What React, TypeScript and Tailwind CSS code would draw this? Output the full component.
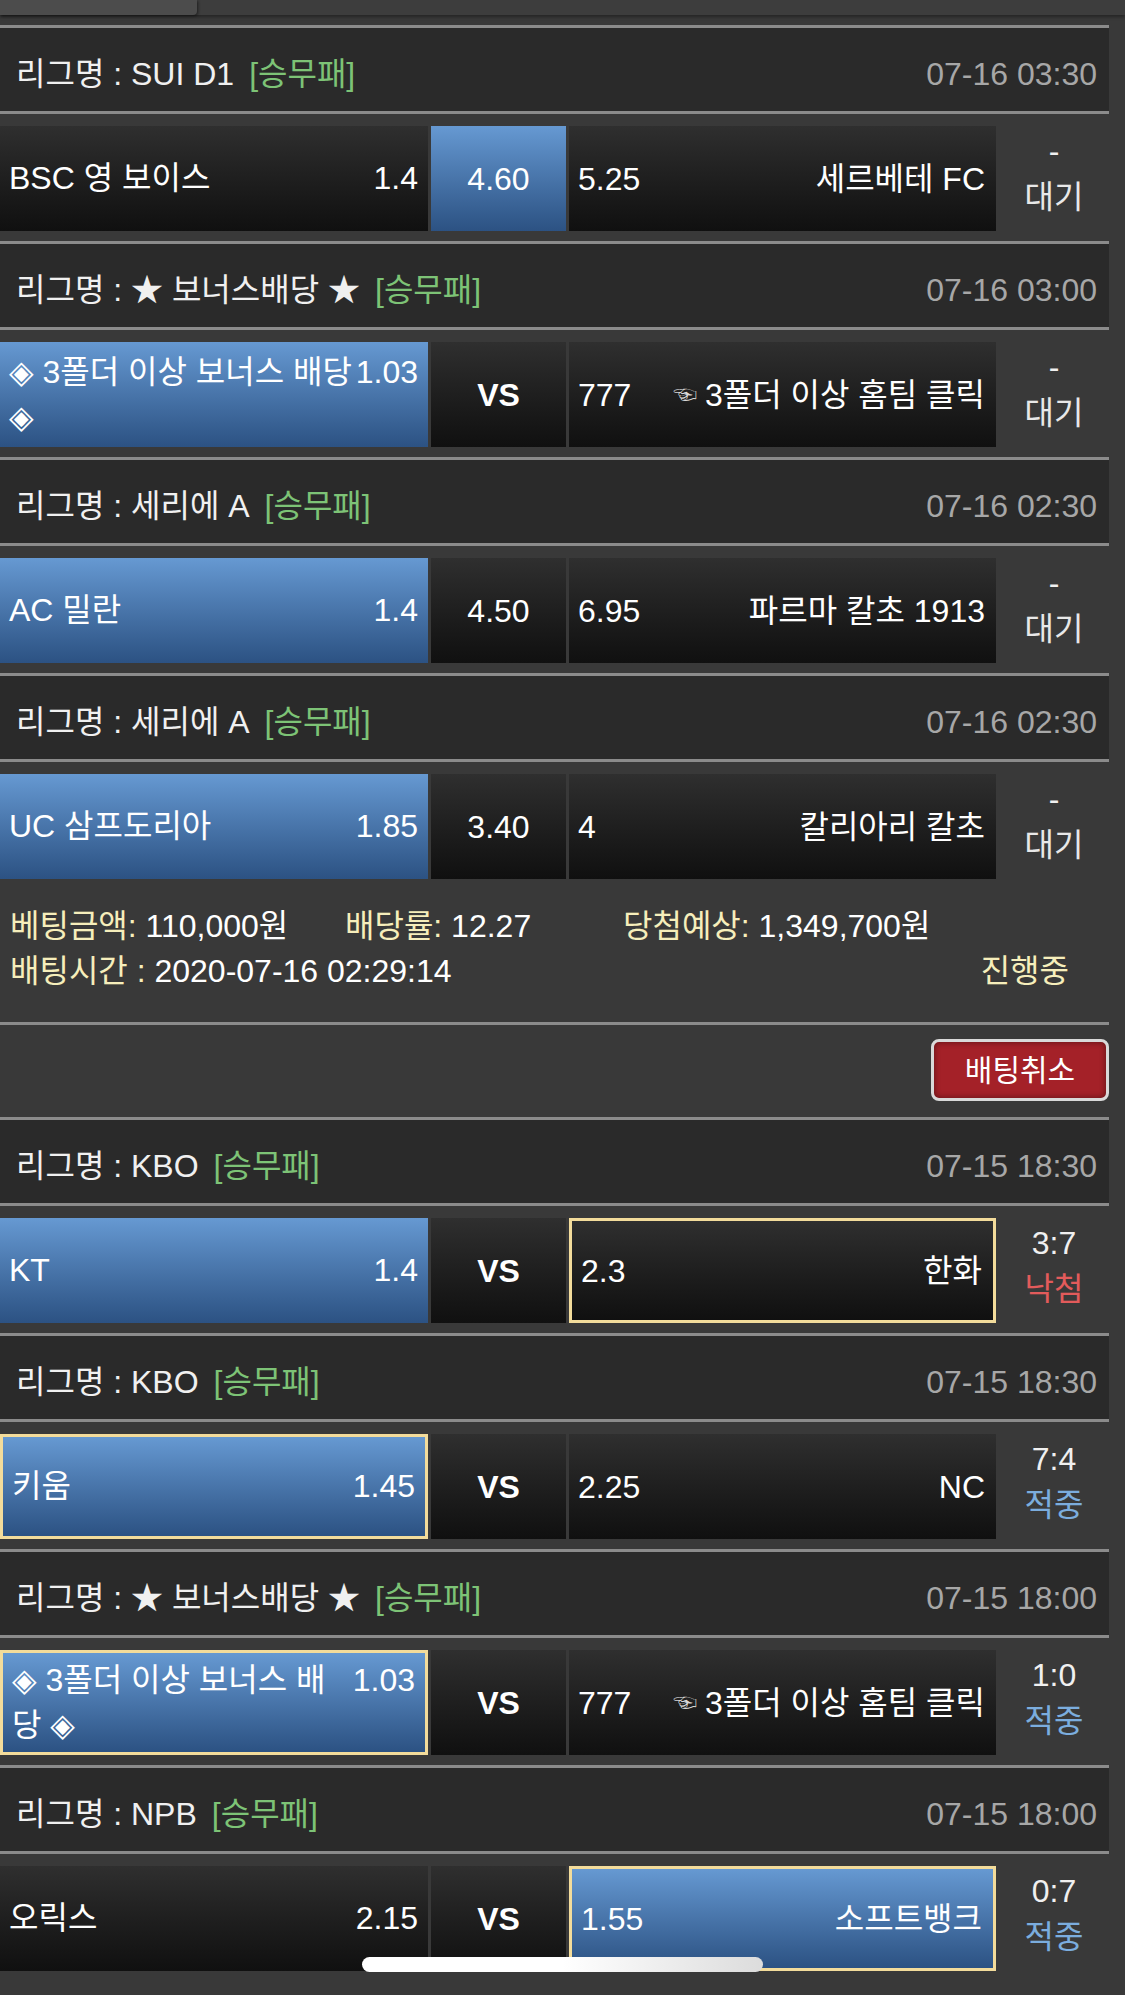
import React from 'react';

type Match = {
    league: string;
    date: string;
    home: string;
    homeOdd: string;
    draw: string;
    away: string;
    awayOdd: string;
    pick: 'home' | 'draw' | 'away';
    boxed?: 'home' | 'away';
    score: string;
    result: string;
};

const pending: Match[] = [
    { league: 'SUI D1', date: '07-16 03:30', home: 'BSC 영 보이스', homeOdd: '1.4', draw: '4.60', away: '세르베테 FC', awayOdd: '5.25', pick: 'draw', score: '-', result: '대기' },
    { league: '★ 보너스배당 ★', date: '07-16 03:00', home: '◈ 3폴더 이상 보너스 배당 ◈', homeOdd: '1.03', draw: 'VS', away: '3폴더 이상 홈팀 클릭', awayOdd: '777', pick: 'home', score: '-', result: '대기' },
    { league: '세리에 A', date: '07-16 02:30', home: 'AC 밀란', homeOdd: '1.4', draw: '4.50', away: '파르마 칼초 1913', awayOdd: '6.95', pick: 'home', score: '-', result: '대기' },
    { league: '세리에 A', date: '07-16 02:30', home: 'UC 삼프도리아', homeOdd: '1.85', draw: '3.40', away: '칼리아리 칼초', awayOdd: '4', pick: 'home', score: '-', result: '대기' },
];

const finished: Match[] = [
    { league: 'KBO', date: '07-15 18:30', home: 'KT', homeOdd: '1.4', draw: 'VS', away: '한화', awayOdd: '2.3', pick: 'home', boxed: 'away', score: '3:7', result: '낙첨' },
    { league: 'KBO', date: '07-15 18:30', home: '키움', homeOdd: '1.45', draw: 'VS', away: 'NC', awayOdd: '2.25', pick: 'home', boxed: 'home', score: '7:4', result: '적중' },
    { league: '★ 보너스배당 ★', date: '07-15 18:00', home: '◈ 3폴더 이상 보너스 배당 ◈', homeOdd: '1.03', draw: 'VS', away: '3폴더 이상 홈팀 클릭', awayOdd: '777', pick: 'home', boxed: 'home', score: '1:0', result: '적중' },
    { league: 'NPB', date: '07-15 18:00', home: '오릭스', homeOdd: '2.15', draw: 'VS', away: '소프트뱅크', awayOdd: '1.55', pick: 'away', boxed: 'away', score: '0:7', result: '적중' },
];

const dark = 'bg-linear-to-b from-[#2f2f2f] to-[#101010]';
const blue = 'bg-linear-to-b from-[#6699d2] to-[#2c5283]';

const resultColor = (r: string) =>
    r === '낙첨' ? 'text-[#e25b5b]' : r === '적중' ? 'text-[#7badde]' : 'text-[#e8e8e8]';

const MatchBlock = ({ m }: { m: Match }) => {
    const isBonus = m.away.includes('홈팀 클릭');
    return (
        <div>
            <div className="h-[3px] bg-[#8b8b8b]" />
            <div className="h-[83px] bg-[#2a2a2a] flex items-center justify-between pl-[16px] pr-[12px] pt-[8px]">
                <div className="text-[#f0f0f0]">
                    리그명 : {m.league}
                    <span className="ml-[15px] text-[#7dc376]">[승무패]</span>
                </div>
                <div className="text-[#a7a7a7]">{m.date}</div>
            </div>
            <div className="h-[3px] bg-[#8b8b8b]" />
            <div className="pt-[12px] pb-[10px]">
                <div className="h-[105px] flex gap-[3px]">
                    <div
                        className={`w-[428px] flex items-center pl-[9px] pr-[10px] ${m.pick === 'home' ? blue : dark} ${m.boxed === 'home' ? 'border-[3px] border-[#f3dc9b]' : ''}`}
                    >
                        <div className="w-full leading-[45px] text-white">
                            <span className="float-right">{m.homeOdd}</span>
                            {m.home}
                        </div>
                    </div>
                    <div
                        className={`w-[135px] flex items-center justify-center text-white ${m.pick === 'draw' ? blue : dark} ${m.draw === 'VS' ? 'font-bold' : ''}`}
                    >
                        {m.draw}
                    </div>
                    <div
                        className={`w-[427px] flex items-center justify-between pl-[9px] pr-[11px] text-white ${m.pick === 'away' ? blue : dark} ${m.boxed === 'away' ? 'border-[3px] border-[#f3dc9b]' : ''}`}
                    >
                        <span>{m.awayOdd}</span>
                        <span className="flex items-center">
                            {isBonus && <span className="text-[24px] text-[#d8d8d8] mr-[8px]">☜</span>}
                            {m.away}
                        </span>
                    </div>
                    <div className="flex-1 flex flex-col items-center justify-center leading-[46px] pb-[10px]">
                        <div className="text-[#f0f0f0]">{m.score}</div>
                        <div className={resultColor(m.result)}>{m.result}</div>
                    </div>
                </div>
            </div>
        </div>
    );
};

export default function App() {
    return (
        <div className="relative w-[1125px] min-h-[1995px] bg-[#393939] text-[32px] font-[family-name:'Liberation_Sans','Noto_Sans_CJK_KR','DejaVu_Sans',sans-serif]">
            {/* top tab strip */}
            <div className="h-[15px] flex bg-[#3d3d3d] shadow-[0_2px_3px_rgba(0,0,0,0.35)]">
                <div className="w-[197px] bg-[#4c4c4c] rounded-br-[4px] shadow-[1px_1px_3px_rgba(0,0,0,0.5)]" />
            </div>
            <div className="h-[10px]" />

            <div className="w-[1109px]">
                {pending.map((m, i) => (
                    <MatchBlock key={i} m={m} />
                ))}

                <div className="pt-[15px] pb-[28px] pl-[10px] pr-[40px] leading-[45px] text-white">
                    <div className="flex">
                        <div className="w-[335px]">
                            <span className="text-[#f6eebb]">베팅금액:</span> 110,000원
                        </div>
                        <div className="w-[278px]">
                            <span className="text-[#f6eebb]">배당률:</span> 12.27
                        </div>
                        <div>
                            <span className="text-[#f6eebb]">당첨예상:</span> 1,349,700원
                        </div>
                    </div>
                    <div className="flex justify-between">
                        <div>
                            <span className="text-[#f6eebb]">배팅시간 :</span> 2020-07-16 02:29:14
                        </div>
                        <div className="text-[#f6eebb]">진행중</div>
                    </div>
                </div>

                <div className="h-[3px] bg-[#8b8b8b]" />
                <div className="h-[92px] pt-[14px] flex justify-end items-start">
                    <button className="h-[62px] w-[178px] rounded-[8px] border-[3px] border-[#d9d9d9] bg-[#a42128] text-white text-[30px] shadow-[inset_0_0_6px_rgba(0,0,0,0.45)]">
                        배팅취소
                    </button>
                </div>

                {finished.map((m, i) => (
                    <MatchBlock key={i} m={m} />
                ))}
            </div>

            {/* home indicator */}
            <div className="absolute left-[362px] top-[1957px] w-[401px] h-[15px] rounded-full bg-linear-to-r from-white via-white to-[#dcdcdc]" />
        </div>
    );
}
